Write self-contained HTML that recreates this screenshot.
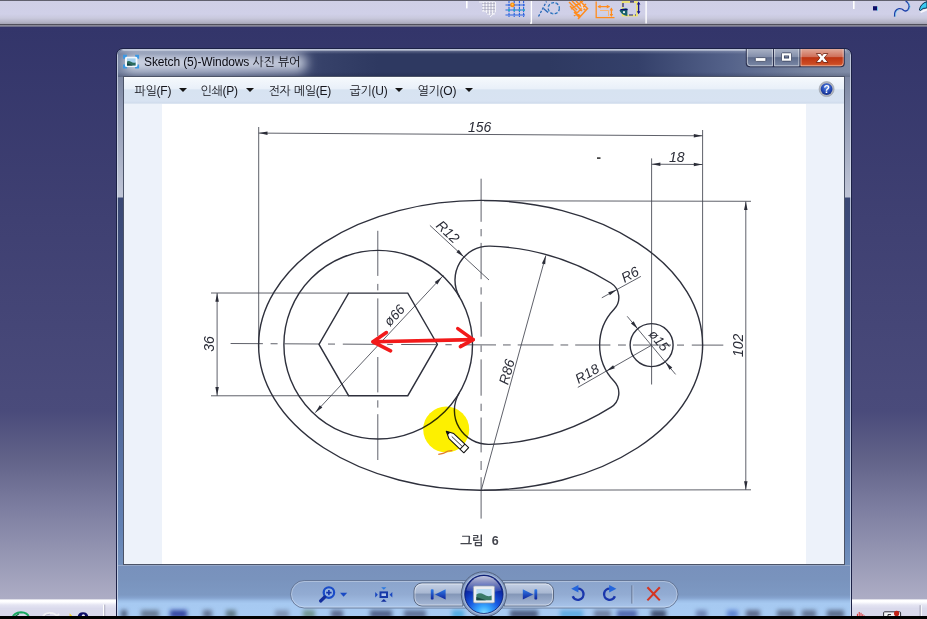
<!DOCTYPE html>
<html><head><meta charset="utf-8">
<style>
html,body{margin:0;padding:0;}
body{width:927px;height:619px;overflow:hidden;position:relative;background:#33346a;font-family:"Liberation Sans","NanumGothic","Noto Sans CJK KR",sans-serif;}
.abs{position:absolute;}
#bg{left:0;top:0;width:927px;height:616px;background:linear-gradient(to bottom,#33356a 0px,#33356a 27px,#3f4072 220px,#4a4b7b 412px,#626389 460px,#7b7c9f 505px,#9495b2 552px,#adadc5 599px);}
#topbar{left:0;top:0;width:927px;height:27px;background:linear-gradient(to bottom,#111118 0px,#cfcfe6 1.2px,#d0d0e8 14px,#c9c9dd 18px,#b4b4c6 22px,#a6a6b6 23.7px,#52525e 24.1px,#4c4c58 25.2px,#888896 25.5px,#8c8c9c 26.3px,#34356a 26.9px);}
#botblack{left:0;top:616px;width:927px;height:3px;background:#000;}
.bott{top:598.5px;height:18px;background:linear-gradient(to bottom,#c9c9da 0,#ffffff 1.2px,#fdfdff 3px,#e4e4f2 6px,#dadaec 9.5px,#d8d8eb 18px);}
#win{left:116px;top:48px;width:734px;height:570px;border:1px solid #1c2146;border-radius:7px 7px 0 0;overflow:hidden;
 background:linear-gradient(to bottom,#6d7894 0,#8e98b2 60px,#bcc2d4 140px,#bfc5d6 148px,#3a4874 149px,#46588a 300px,#6382b4 480px,#7391bd 517px,#86a2ca 549px,#9dbfe9 551px,#a6c9f1 568px);
 box-shadow:inset 0 0 0 1px rgba(215,222,238,.75);}
#titlebg{left:1px;top:1px;width:732px;height:27px;background:linear-gradient(to right,#707d9c 0,#5a668c 110px,#364169 205px,#2e3961 260px,#2e3961 430px,#34406a 520px,#54628a 610px,#76839f 690px,#7f8ba6 732px);}
#titletop{left:1px;top:1px;width:732px;height:27px;background:linear-gradient(to bottom,rgba(235,240,250,.75) 0,rgba(200,208,228,.25) 1.5px,rgba(255,255,255,0) 4px,rgba(255,255,255,0) 22px,rgba(20,25,50,.25) 27px);border-radius:6px 6px 0 0;}
#glow{left:6px;top:5px;width:184px;height:18px;border-radius:9px;background:rgba(236,241,250,.78);filter:blur(5.5px);}
#title{left:27px;top:6px;font-size:12px;color:#0a0a12;white-space:nowrap;letter-spacing:-0.12px;}
#botpanel{left:1px;top:516px;width:732px;height:52px;background:linear-gradient(to bottom,#a3b2cc 0,#7891bc 1.5px,#7993bd 14px,#7d99c3 30px,#86a4d0 33px,#9dbfe8 36px,#a6c9f1 38.5px,#a8cbf3 52px);}
#content{left:124px;top:77px;width:720px;height:487px;background:#edf2fa;box-shadow:0 0 0 1px #4c5468;}
#menubar{left:0;top:0;width:720px;height:27px;background:linear-gradient(to bottom,#ffffff 0,#f4f8fc 1.5px,#e9f0f9 11.5px,#d7e3f1 13px,#d8e3f2 24px,#d0dcec 26px,#e6edf6 27px);}
#canvas{left:38px;top:27px;width:644px;height:460px;background:#fff;}
.menu{position:absolute;top:7px;font-size:12px;color:#15151c;white-space:nowrap;letter-spacing:-0.25px;}
.tri{position:absolute;top:11.2px;width:0;height:0;margin-left:-0.4px;border-left:4px solid transparent;border-right:4px solid transparent;border-top:4.6px solid #151515;}
.cbtn{position:absolute;top:0;height:18px;}
</style></head><body>
<div id="bg" class="abs"></div>
<div id="topbar" class="abs"></div>
<div class="abs bott" style="left:0;width:116px"></div>
<div class="abs bott" style="left:852px;width:75px"></div>
<div id="win" class="abs">
  <div id="titlebg" class="abs"></div>
  <div id="titletop" class="abs"></div>
  <div id="glow" class="abs"></div>
  <div id="title" class="abs">Sketch (5)-Windows 사진 뷰어</div>
  <div id="botpanel" class="abs"></div>
</div>
<div id="content" class="abs">
  <div id="menubar" class="abs">
    <span class="menu" style="left:10.5px">파일(F)</span><i class="tri" style="left:55.2px"></i>
    <span class="menu" style="left:76.5px">인쇄(P)</span><i class="tri" style="left:122.6px"></i>
    <span class="menu" style="left:144.5px">전자 메일(E)</span>
    <span class="menu" style="left:225.5px">굽기(U)</span><i class="tri" style="left:271.8px"></i>
    <span class="menu" style="left:293.5px">열기(O)</span><i class="tri" style="left:341.2px"></i>
  </div>
  <div id="canvas" class="abs"></div>
</div>
<svg id="dwg" class="abs" style="left:0;top:0" width="927" height="619" viewBox="0 0 927 619">
<defs>
<path id="ah" d="M0 0 L-8.6 -1.75 L-8.6 1.75 Z"/>
</defs>
<g fill="none" stroke="#42444f" stroke-width="0.85">
<!-- 156 dimension -->
<line x1="258.7" y1="127" x2="258.7" y2="348"/>
<line x1="702.6" y1="130" x2="702.6" y2="350"/>
<line x1="258.7" y1="133.1" x2="702.6" y2="135.8"/>
<!-- 18 dimension -->
<line x1="651.6" y1="158.4" x2="651.6" y2="384.5"/>
<line x1="651.6" y1="164.2" x2="702.6" y2="164.5"/>
<!-- 102 dimension -->
<line x1="484" y1="200.8" x2="751" y2="201.3"/>
<line x1="484" y1="490.2" x2="751" y2="489.8"/>
<line x1="745.8" y1="201.5" x2="745.8" y2="489.8"/>
<!-- 36 dimension -->
<line x1="211" y1="293" x2="349" y2="293.1"/>
<line x1="211" y1="395.8" x2="349" y2="395.7"/>
<line x1="217.1" y1="293" x2="217.1" y2="395.8"/>
<!-- center lines -->
<path d="M230.6 343.50 L262.9 343.68 M270.6 343.73 L277.6 343.77 M284.6 343.81 L319.2 344.00 M328.0 344.05 L335.0 344.09 M342.8 344.14 L380.0 344.35 M387.2 344.39 L392.8 344.42 M401.2 344.47 L436.5 344.67 M445.4 344.72 L451.7 344.76 M460.0 344.81 L496.0 344.93 M503.0 344.94 L510.7 344.94 M517.7 344.95 L553.5 344.98 M560.5 344.98 L568.2 344.99 M575.2 345.00 L610.4 345.02 M618.0 345.03 L625.9 345.04 M632.9 345.04 L671.0 345.07 M677.0 345.08 L684.0 345.08 M691.8 345.09 L723.3 345.11 M481.1 178.7 V221.8 M481.1 229.0 V236.3 M481.1 242.9 V279.2 M481.1 287.3 V294.5 M481.1 301.8 V336.7 M481.1 345.4 V352.0 M481.1 359.4 V395.7 M481.1 403.7 V411.0 M481.1 417.5 V452.4 M481.1 461.0 V470.0 M481.1 477.2 V518.6 M377.8 230.8 V275.9 M377.8 283.9 V290.4 M377.8 298.4 V336.0 M377.8 357.0 V392.4 M377.8 400.3 V407.6 M377.8 414.2 V460.0"/>
<!-- leaders -->
<line x1="315.2" y1="412.7" x2="443.5" y2="275.3"/>
<line x1="429.9" y1="225.4" x2="489" y2="280"/>
<line x1="481.4" y1="489.6" x2="545.8" y2="255.6"/>
<line x1="601.8" y1="297.8" x2="640.9" y2="276.4"/>
<line x1="577.8" y1="387.4" x2="651.6" y2="345.2"/>
<line x1="627.2" y1="316.3" x2="675.6" y2="374.4"/>
</g>
<g fill="none" stroke="#2e303c" stroke-width="1.4">
<ellipse cx="480.6" cy="345.3" rx="222" ry="144.9"/>
<circle cx="378.2" cy="344.7" r="94.3"/>
<circle cx="651.6" cy="345.1" r="21.5"/>
<polygon points="319.0,344.4 348.6,293.1 407.8,293.1 437.4,344.4 407.8,395.7 348.6,395.7"/>
<path d="M459.6 297.2 A34.0 34.0 0 0 1 490.2 246.1 A244.0 244.0 0 0 1 610.8 283.0 A17.0 17.0 0 0 1 614.1 309.2 A52.0 52.0 0 0 0 614.1 381.2 A17.0 17.0 0 0 1 610.8 407.4 A244.0 244.0 0 0 1 489.5 444.4 A34.0 34.0 0 0 1 459.2 393.0"/>
</g>
<g fill="#2b2d38" stroke="none">
<use href="#ah" transform="translate(258.9,133.1) rotate(180.3)"/>
<use href="#ah" transform="translate(702.4,135.8) rotate(0.3)"/>
<use href="#ah" transform="translate(651.8,164.2) rotate(180)"/>
<use href="#ah" transform="translate(702.4,164.5)"/>
<use href="#ah" transform="translate(745.8,201.5) rotate(-90)"/>
<use href="#ah" transform="translate(745.8,489.8) rotate(90)"/>
<use href="#ah" transform="translate(217.1,293.2) rotate(-90)"/>
<use href="#ah" transform="translate(217.1,395.6) rotate(90)"/>
<use href="#ah" transform="translate(441.9,277) rotate(-47)"/>
<use href="#ah" transform="translate(315.2,412.7) rotate(133)"/>
<use href="#ah" transform="translate(463.9,256.9) rotate(42.8)"/>
<use href="#ah" transform="translate(545.8,255.6) rotate(-74.6)"/>
<use href="#ah" transform="translate(616.6,289.7) rotate(-28.7)"/>
<use href="#ah" transform="translate(606.5,371) rotate(150.2)"/>
<use href="#ah" transform="translate(637.8,329) rotate(50.2)"/>
<use href="#ah" transform="translate(665.4,362.1) rotate(230.2)"/>
</g>
<g fill="#2b2d38" stroke="none" font-family="'Liberation Sans',sans-serif" font-style="italic" font-size="14px">
<text x="468" y="132.4">156</text>
<text x="669" y="162">18</text>
<text transform="translate(742.8,357) rotate(-90)">102</text>
<text transform="translate(213.7,351.8) rotate(-90)">36</text>
<text transform="translate(389.8,327) rotate(-47)" font-size="13.6px">ø66</text>
<text transform="translate(435.2,226.6) rotate(42.8)">R12</text>
<text transform="translate(508,385.5) rotate(-74.6)">R86</text>
<text transform="translate(624.5,283) rotate(-28.7)">R6</text>
<text transform="translate(578.6,384) rotate(-29.8)" font-size="13.6px">R18</text>
<text transform="translate(648,334.4) rotate(50.2)" font-size="13.4px">ø15</text>
</g>
<text x="460.2" y="545" word-spacing="4.6px" font-family="'Liberation Sans','NanumGothic','Noto Sans CJK KR',sans-serif" font-weight="bold" font-size="12.5px" fill="#44464e" stroke="none">그림 6</text>
<rect x="597" y="157.3" width="3.5" height="1.6" fill="#333"/>
<!-- yellow highlight and annotations -->
<circle cx="446.2" cy="429.4" r="23" fill="#fdf000" style="mix-blend-mode:multiply"/>
<path d="M438.3 454.4 Q444 453.6 446 452 T452.4 450.6" fill="none" stroke="#e07a2a" stroke-width="1.3"/>
<g fill="none" stroke="#f21a1a" stroke-width="3.6" stroke-linecap="round" stroke-linejoin="round">
<path d="M373 341.8 L473.2 339.6"/>
<path d="M386.4 332.6 L373 341.8 L390.6 350.8"/>
<path d="M457.8 328.6 L473.2 339.6 L460.4 346.6"/>
</g>
<!-- pencil cursor -->
<g transform="translate(446.3,431.3) rotate(43.5)">
<path d="M0 0 L7 -3.5 L27.5 -3.5 L27.5 3.5 L7 3.5 Z" fill="#fff" stroke="#111" stroke-width="1.05" stroke-linejoin="round"/>
<path d="M-0.3 0 L3.6 -1.9 L3.6 1.9 Z" fill="#111"/>
<line x1="22.3" y1="-3.5" x2="22.3" y2="3.5" stroke="#111" stroke-width="1"/>
<line x1="7.5" y1="0" x2="21.5" y2="0" stroke="#111" stroke-width="0.8"/>
</g>
</svg>

<svg id="topicons" class="abs" style="left:0;top:0" width="927" height="619" viewBox="0 0 927 619">
<defs><filter id="b1" x="-20%" y="-20%" width="140%" height="140%"><feGaussianBlur stdDeviation="0.45"/></filter>
<filter id="b3" x="-50%" y="-200%" width="200%" height="500%"><feGaussianBlur stdDeviation="2.2"/></filter></defs>
<g filter="url(#b1)">
<!-- small separators -->
<rect x="466" y="1" width="1.6" height="7.4" fill="#fff"/>
<rect x="853" y="1" width="1.6" height="8" fill="#fff"/>
<!-- grey grid icon -->
<g stroke="#f4f4f8" stroke-width="1" fill="none">
<path d="M479 2 H495 M482 5 H495 M482 8 H495 M482 11 H495 M487 14 H495"/>
<path d="M483.5 2 V11 M486.5 2 V13 M489.5 2 V15 M492.5 2 V15 M495.5 2 V12 L490 17"/>
</g>
<g stroke="#a8a8b8" stroke-width=".6" fill="none"><path d="M482 3.5 H495 M482 6.5 H495 M482 9.5 H495 M485 2 V11 M488 2 V14 M491 2 V15 M494 2 V13"/></g>
<!-- blue grid icon -->
<g stroke="#2a62e0" stroke-width="1.1" fill="none">
<path d="M509 1 V17 M514.2 1 V17 M519.4 1 V17 M523.6 1 V17" stroke-dasharray="2.2 .8"/>
<path d="M505.5 5 H525 M505.5 10 H525 M505.5 15 H525"/>
</g>
<g fill="#1ab0b8"><rect x="508.2" y="9.2" width="1.8" height="1.8"/><rect x="513.4" y="9.2" width="1.8" height="1.8"/><rect x="518.6" y="9.2" width="1.8" height="1.8"/><rect x="522.8" y="9.2" width="1.8" height="1.8"/></g>
<circle cx="512.4" cy="4.9" r="2.3" fill="#ff8a10"/><circle cx="512.4" cy="4.6" r="1" fill="#ffd040"/>
<!-- separator with hook -->
<path d="M530 23.2 H531.4 V1" fill="none" stroke="#fff" stroke-width="1.3"/>
<!-- dashed sketch icon -->
<path d="M538.5 16.5 L546.5 1.5" stroke="#2a68b8" stroke-width="1.3" stroke-dasharray="2.4 1.6" fill="none"/>
<path d="M543.5 8.5 L548 12.5" stroke="#2a68b8" stroke-width="1.3" fill="none"/>
<circle cx="553.8" cy="8.2" r="5.6" stroke="#2a68b8" stroke-width="1.3" stroke-dasharray="3 1.6" fill="none"/>
<circle cx="553.8" cy="8.2" r="5.6" stroke="#58d0e8" stroke-width=".6" stroke-dasharray="1.2 3.4" fill="none"/>
<!-- orange hatch icon -->
<g stroke="#ff8c1e" stroke-width="1.5" fill="none">
<path d="M569 2 L577 10 M572 1 L582 11 M576 1 L586 11 M580 1 L588 9 M570 6 L580 16 M574 12 L580 18 M586 4 L574 16 M588 8 L578 19 M583 1 L571 9"/>
</g>
<path d="M581 3 L584 9 L581.6 8.6 Z" fill="#fff" opacity=".8"/>
<!-- orange dimension icon -->
<g stroke="#ff8c1e" stroke-width="1.3" fill="none">
<path d="M596.2 1.5 V17.6 H614.5"/>
<path d="M598 6.6 H609.5 M611.4 8.5 V16"/>
<path d="M600 10.5 H608.5 V16" stroke-width=".9" stroke="#ffb060"/>
</g>
<g fill="#ff8c1e"><path d="M597.4 6.6 L600.6 4.8 V8.4 Z M610 6.6 L606.8 4.8 V8.4 Z M611.4 7.6 L609.6 10.6 H613.2 Z M611.4 17 L609.6 14 H613.2 Z"/></g>
<!-- yellow/blue icon -->
<rect x="622.6" y="2" width="14.4" height="13.6" fill="none" stroke="#f2e660" stroke-width="1.6"/>
<path d="M623 3 V8 M629 15 H636 M630 1.8 H636" stroke="#1a1a90" stroke-width="1.2" fill="none" stroke-dasharray="4 2"/>
<path d="M638.6 3 V13" stroke="#14148a" stroke-width="1.3"/>
<path d="M638.6 1.6 L636.8 4.6 H640.4 Z M638.6 14.2 L636.8 11.2 H640.4 Z" fill="#14148a"/>
<path d="M619.4 10.6 Q623 7.6 627.4 8.4 V16 Q622.6 16 619.4 10.6 Z" fill="#14606c"/>
<path d="M620.4 9.6 H627.6" stroke="#101070" stroke-width="1.2"/>
<circle cx="624" cy="12.2" r="1.1" fill="#e8f4f4"/>
<rect x="645.4" y="1" width="1.4" height="22.4" fill="#fff"/>
<!-- right side icons -->
<rect x="873" y="6.2" width="4.2" height="4.2" fill="#101068"/>
<rect x="877" y="7" width="1" height="4" fill="#60d8f0" opacity=".7"/>
<path d="M894.6 16.6 Q894 9.6 899 8.6 Q902 8.4 903.6 10.2 Q906 12 908 9.6 Q910.6 6 907.6 2.6 Q906.6 1.4 905.6 1.2" fill="none" stroke="#1c3fa8" stroke-width="1.4"/>
<path d="M895.6 16.6 Q895 10.6 899 9.8 M908.6 10.6 Q911.6 6.6 908.6 2.6" fill="none" stroke="#58c8f0" stroke-width=".8" opacity=".8"/>
<path d="M919.4 10 Q920.4 3.6 927 1.6 V8 Q922.6 7.6 920.4 10.6 Z" fill="#38c8f0" stroke="#0a3050" stroke-width="1"/>
<path d="M920 11.4 L927 8.6 V10.4 L921 13 Z" fill="#fff" opacity=".8"/>
</g>
<!-- bottom-left toolbar fragments -->
<g filter="url(#b1)" transform="translate(0,1.2)">
<path d="M12.6 616 Q14 611.4 21 611 Q27.6 611.2 29 616" fill="none" stroke="#18a860" stroke-width="2"/>
<path d="M14 616 L19 612.6" stroke="#0a7040" stroke-width="1.2"/>
<path d="M42.6 616 Q44 611.8 50 611.6 Q55 611.8 57 615 L59 612.6" fill="none" stroke="#f0f0f4" stroke-width="1.8"/>
<path d="M44 616 Q46 613 50 613" fill="none" stroke="#b0b0c0" stroke-width=".8"/>
<path d="M69.6 612 L73.4 616 H69.6 Z" fill="#f0d020"/>
<path d="M77.6 616 Q78 611 83 611 Q88 611 88.4 616 Z" fill="#101068"/>
<circle cx="83.4" cy="614.6" r="1.6" fill="#e8e8f4"/>
<rect x="103" y="603.4" width="1.4" height="12.6" fill="#fff"/>
<rect x="104.4" y="603.4" width=".8" height="12.6" fill="#a0a0b4"/>
<!-- bottom-right -->
<path d="M857.4 616 V612.6 M859.2 616 V610.8 M861 616 V611.6 M862.8 616 V613 M864.4 616 V614.4" stroke="#e03030" stroke-width="1" fill="none"/>
<rect x="883.6" y="610.6" width="17" height="6" rx="1" fill="#f4f4f6" stroke="#30303c" stroke-width="1"/>
<circle cx="896.6" cy="612.2" r="2.6" fill="#c02018"/>
<path d="M888 616 V613.4 H891" stroke="#202028" stroke-width="1" fill="none"/>
<rect x="919.6" y="604" width="1.2" height="12" fill="#a0a0b4"/>
<rect x="920.8" y="604" width="1" height="12" fill="#fff"/>
</g>
<!-- blurred blobs behind bottom glass -->
<g filter="url(#b3)" opacity=".9">
<rect x="121" y="610" width="6" height="8" fill="#4a5878"/>
<rect x="141" y="610" width="18" height="8" fill="#64748e"/>
<rect x="170" y="610" width="17" height="8" fill="#2a3a9c"/>
<rect x="203" y="610" width="9" height="8" fill="#5e6e8c"/>
<rect x="226" y="610" width="10" height="8" fill="#5c7480"/>
<rect x="275" y="610" width="14" height="8" fill="#7c90b0"/>
<rect x="303" y="610" width="12" height="8" fill="#6c9088"/>
<rect x="331" y="610" width="12" height="8" fill="#566488"/>
<rect x="370" y="610" width="22" height="8" fill="#4a5880"/>
<rect x="404" y="610" width="22" height="8" fill="#5a6a90"/>
<rect x="452" y="610" width="12" height="8" fill="#4aa8e0"/>
<rect x="510" y="610" width="28" height="8" fill="#465478"/>
<rect x="560" y="610" width="23" height="8" fill="#58a8e0"/>
<rect x="594" y="610" width="17" height="8" fill="#6a7a9c"/>
<rect x="617" y="610" width="20" height="8" fill="#4860a8"/>
<rect x="651" y="610" width="15" height="8" fill="#3a4668"/>
<rect x="696" y="610" width="11" height="8" fill="#6a80b0"/>
<rect x="727" y="610" width="11" height="8" fill="#5a80d0"/>
<rect x="746" y="610" width="14" height="8" fill="#586484"/>
<rect x="777" y="610" width="17" height="8" fill="#5a6a88"/>
<rect x="802" y="610" width="14" height="8" fill="#5e6e8c"/>
<rect x="827" y="610" width="17" height="8" fill="#566684"/>
</g>
</svg>

<svg id="chrome" class="abs" style="left:0;top:0" width="927" height="619" viewBox="0 0 927 619">
<defs>
<linearGradient id="gbtn" x1="0" y1="0" x2="0" y2="1"><stop offset="0" stop-color="#a9b1c5"/><stop offset=".45" stop-color="#838eaa"/><stop offset=".5" stop-color="#5f6c8c"/><stop offset="1" stop-color="#7a88a6"/></linearGradient>
<linearGradient id="gcls" x1="0" y1="0" x2="0" y2="1"><stop offset="0" stop-color="#e0a898"/><stop offset=".45" stop-color="#cf705a"/><stop offset=".5" stop-color="#bd3412"/><stop offset=".85" stop-color="#cc4a22"/><stop offset="1" stop-color="#dc6a3c"/></linearGradient>
<radialGradient id="ghelp" cx=".5" cy=".35" r=".7"><stop offset="0" stop-color="#5a8ae8"/><stop offset=".6" stop-color="#2448b4"/><stop offset="1" stop-color="#122a80"/></radialGradient>
<linearGradient id="gpic" x1="0" y1="0" x2="1" y2="1"><stop offset="0" stop-color="#cfe6f6"/><stop offset=".45" stop-color="#6aa6b4"/><stop offset="1" stop-color="#1e4a50"/></linearGradient>
<linearGradient id="gnav" x1="0" y1="0" x2="0" y2="1"><stop offset="0" stop-color="#c5d1e6"/><stop offset=".42" stop-color="#a9b8d2"/><stop offset=".5" stop-color="#8497b8"/><stop offset="1" stop-color="#a9bbd9"/></linearGradient>
<linearGradient id="gblue" x1="0" y1="0" x2="0" y2="1"><stop offset="0" stop-color="#2f7be8"/><stop offset="1" stop-color="#10249a"/></linearGradient>
<radialGradient id="gorb" cx=".5" cy="1" r=".85"><stop offset="0" stop-color="#8ae0ff"/><stop offset=".22" stop-color="#38a8ff"/><stop offset=".5" stop-color="#1858e0"/><stop offset=".8" stop-color="#0c2cac"/><stop offset="1" stop-color="#0a1c80"/></radialGradient>
<linearGradient id="ggloss" x1="0" y1="0" x2="0" y2="1"><stop offset="0" stop-color="#fff" stop-opacity=".75"/><stop offset="1" stop-color="#fff" stop-opacity=".08"/></linearGradient>
<linearGradient id="gpill" x1="0" y1="0" x2="0" y2="1"><stop offset="0" stop-color="#8aa4cc"/><stop offset=".5" stop-color="#92abd2"/><stop offset="1" stop-color="#a9c6ec"/></linearGradient>
</defs>
<!-- caption buttons -->
<g>
<path d="M745.8 49 H844.8 V63.3 a4 4 0 0 1 -4 4 H749.8 a4 4 0 0 1 -4 -4 Z" fill="#232846" opacity=".9"/>
<path d="M746.8 49 H773 V66.3 H750.3 a3.5 3.5 0 0 1 -3.5 -3.5 Z" fill="url(#gbtn)"/>
<rect x="774" y="49" width="25.4" height="17.3" fill="url(#gbtn)"/>
<path d="M800.4 49 H843.8 V62.8 a3.5 3.5 0 0 1 -3.5 3.5 H800.4 Z" fill="url(#gcls)"/>
<path d="M747.4 49 V62.8 a3 3 0 0 0 3 3 H772.4 V49" fill="none" stroke="#fff" stroke-opacity=".5" stroke-width="1"/>
<path d="M774.6 49 V65.8 H798.8 V49" fill="none" stroke="#fff" stroke-opacity=".5" stroke-width="1"/>
<path d="M801 49 V65.8 H840.2 a3 3 0 0 0 3 -3 V49" fill="none" stroke="#fff" stroke-opacity=".45" stroke-width="1"/>
<rect x="755.3" y="57.6" width="10.6" height="3.8" rx="1" fill="#fff" stroke="#3a425c" stroke-width=".8"/>
<path d="M782.9 54.4 H790.1 V59.6 H782.9 Z" fill="none" stroke="#39415b" stroke-width="3.6" stroke-linejoin="round"/>
<path d="M782.9 54.4 H790.1 V59.6 H782.9 Z" fill="none" stroke="#fff" stroke-width="2.1"/>
<text x="822.2" y="62" font-family="'Liberation Sans',sans-serif" font-weight="bold" font-size="14px" fill="#fff" stroke="#6a2a1c" stroke-width="1.5" paint-order="stroke" text-anchor="middle" transform="translate(822.2 0) scale(1.25 1) translate(-822.2 0)">x</text>
<text x="822.2" y="62" font-family="'Liberation Sans',sans-serif" font-weight="bold" font-size="14px" fill="#fff" stroke="#fff" stroke-width=".2" text-anchor="middle" transform="translate(822.2 0) scale(1.25 1) translate(-822.2 0)">x</text>
</g>
<!-- title icon -->
<g>
<path d="M123 54.8 h4 v4 h-4z M135.1 54.8 h4 v4 h-4z M123 64.6 h4 v4 h-4z M135.1 64.6 h4 v4 h-4z" fill="#3d98e2"/>
<rect x="125" y="56.8" width="12.4" height="10.2" rx="1.6" fill="#f2f8fd"/>
<rect x="127" y="58.4" width="8.6" height="7.2" fill="#a4d0f0"/>
<path d="M127 61.4 Q129 60.2 131 61.8 T135.6 62.6 V65.6 H127 Z" fill="#2a6a5c"/>
<path d="M127 63.2 L133 65.6 H127 Z" fill="#123a3a"/>
</g>
<!-- help -->
<g>
<circle cx="826.6" cy="89.1" r="7.5" fill="#b2b6be" stroke="#9ca2ac" stroke-width=".7"/>
<circle cx="826.6" cy="89.1" r="5.9" fill="url(#ghelp)"/>
<text x="826.8" y="93" font-family="'Liberation Sans',sans-serif" font-weight="bold" font-size="10.5px" fill="#fff" text-anchor="middle">?</text>
</g>
<!-- bottom toolbar -->
<g>
<rect x="290.5" y="580.5" width="387.5" height="27.5" rx="13.75" fill="url(#gpill)" stroke="#5f708e" stroke-opacity=".85" stroke-width="1"/>
<rect x="291.5" y="581.5" width="385.5" height="25.5" rx="12.75" fill="none" stroke="#fff" stroke-opacity=".3" stroke-width="1"/>
<!-- magnifier -->
<g fill="none">
<circle cx="328.9" cy="592.6" r="5.2" stroke-width="2.3" stroke="#1a4cc8"/>
<circle cx="328.9" cy="592.6" r="4" fill="#9cc0f0" fill-opacity=".55" stroke="none"/>
<path d="M324.8 597 L320.6 601" stroke-width="3.2" stroke-linecap="round" stroke="#142e9c"/>
<path d="M326.2 592.6 H331.6 M328.9 589.9 V595.3" stroke-width="1.6" stroke="#1434ac"/>
</g>
<path d="M340 592.8 H347.2 L343.6 596.8 Z" fill="#1a4ac4"/>
<!-- fit -->
<g fill="#1a48c0">
<rect x="380.5" y="592.4" width="6.5" height="4.6" fill="#b4c8ec" stroke="#173aa8" stroke-width="2"/>
<path d="M381.2 587.2 H386.4 L383.8 589.8 Z" fill="#2a78e0"/>
<path d="M380.9 601.8 H386.7 L383.8 599 Z" fill="#14309c"/>
<path d="M375.2 592 V597.4 L377.9 594.7 Z"/>
<path d="M392.3 592 V597.4 L389.6 594.7 Z"/>
</g>
<!-- prev / next -->
<path d="M463 583 H422 a8 8 0 0 0 -8 8 V598 a8 8 0 0 0 8 8 H463 Z" fill="url(#gnav)" stroke="#5a6882" stroke-width="1"/>
<path d="M504 583 H545.5 a8 8 0 0 1 8 8 V598 a8 8 0 0 1 -8 8 H504 Z" fill="url(#gnav)" stroke="#5a6882" stroke-width="1"/>
<path d="M462 584 H422 a7 7 0 0 0 -7 7 V598 a7 7 0 0 0 7 7 H462" fill="none" stroke="#fff" stroke-opacity=".45"/>
<path d="M505 584 H545.5 a7 7 0 0 1 7 7 V598 a7 7 0 0 1 -7 7 H505" fill="none" stroke="#fff" stroke-opacity=".45"/>
<g fill="url(#gblue)">
<rect x="430.8" y="589.2" width="2.8" height="10.4" rx=".8"/>
<path d="M435 594.4 L445.6 589.2 V599.6 Z"/>
<rect x="534.4" y="589.2" width="2.8" height="10.4" rx=".8"/>
<path d="M533.2 594.4 L522.8 589.2 V599.6 Z"/>
</g>
<!-- orb -->
<circle cx="483.9" cy="594.3" r="22.6" fill="#8199c2" stroke="#55647f" stroke-width="1"/>
<circle cx="483.9" cy="594.3" r="20.9" fill="#a6b9d9"/>
<circle cx="483.9" cy="594.3" r="19.2" fill="url(#gorb)" stroke="#0a1a6a" stroke-width=".8"/>
<path d="M466.4 590.6 a17.8 17.8 0 0 1 35 0 q-17.5 4.6 -35 0Z" fill="url(#ggloss)"/>
<rect x="473.4" y="585.9" width="21.2" height="17" rx="1.4" fill="#ecedef" stroke="#8e9aac" stroke-width=".8"/>
<rect x="476.4" y="589" width="15.2" height="11.2" fill="#b8dcf2"/>
<path d="M476.4 594.4 Q480 592 484 594.6 T491.6 595.6 V600.2 H476.4 Z" fill="#3a7a68"/>
<path d="M476.4 597 L486 600.2 H476.4 Z" fill="#1c4844"/>
<!-- rotate ccw -->
<g fill="none" stroke="url(#gblue)" stroke-width="2.4">
<path d="M577.6 588.6 a5.6 5.6 0 1 1 -4.9 7.6" stroke="#1a36ac"/>
<path d="M610 588.6 a5.6 5.6 0 1 0 4.9 7.6" stroke="#1a36ac"/>
</g>
<path d="M571.2 588.8 L578.4 585 V592.6 Z" fill="#2466dc"/>
<path d="M616.4 588.8 L609.2 585 V592.6 Z" fill="#2466dc"/>
<line x1="631.9" y1="585.3" x2="631.9" y2="603.6" stroke="#62728f" stroke-width="1"/>
<line x1="632.9" y1="585.3" x2="632.9" y2="603.6" stroke="#fff" stroke-opacity=".25" stroke-width="1"/>
<path d="M647.4 587.2 L659.8 600.4 M659.8 587.2 L647.4 600.4" stroke="#d43422" stroke-width="2.1" fill="none"/>
</g>
</svg>

<div id="botblack" class="abs"></div>
</body></html>
